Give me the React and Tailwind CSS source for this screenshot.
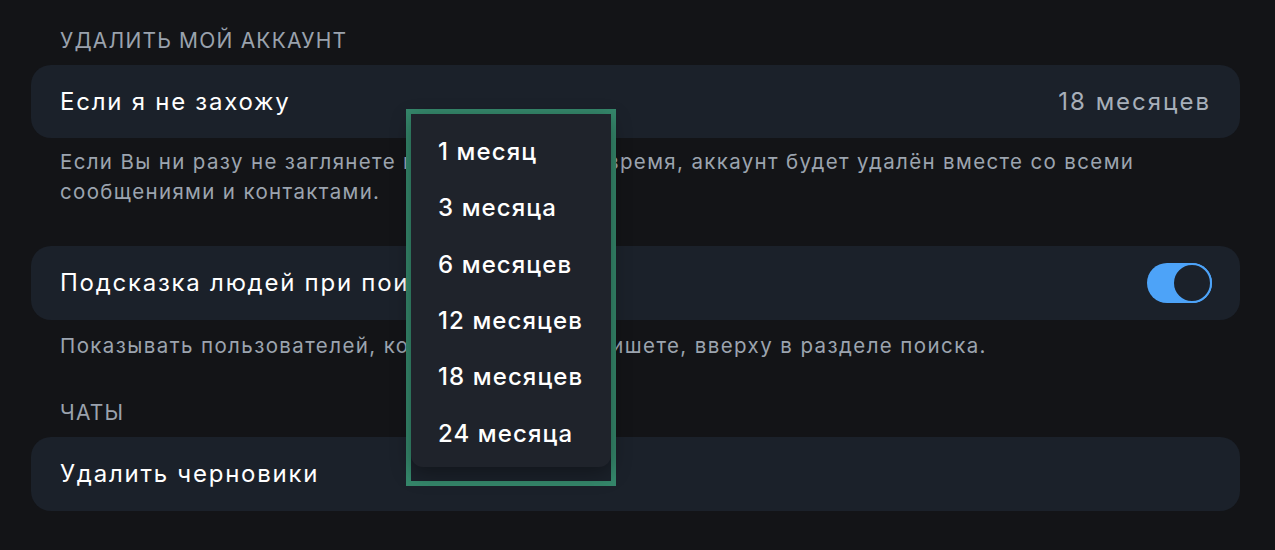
export default function App() {
  const options = ["1 месяц", "3 месяца", "6 месяцев", "12 месяцев", "18 месяцев", "24 месяца"];

  return (
    <div className="relative h-[550px] w-[1275px] overflow-hidden bg-[#131417] pt-[28px] pl-[31px] pr-[35px] font-['Inter','Noto_Sans',sans-serif] antialiased">
      {/* Удалить аккаунт */}
      <p className="pl-[29px] text-[21px] leading-[26px] tracking-[1.2px] text-[#9aa2ad] mb-[11px]">УДАЛИТЬ МОЙ АККАУНТ</p>
      <div className="flex h-[73px] items-center justify-between rounded-[20px] bg-[#1b212a] px-[29px]">
        <span className="text-[24px] tracking-[1.75px] text-white">Если я не захожу</span>
        <span className="text-[24px] tracking-[2px] text-[#a7afb9]">18 месяцев</span>
      </div>
      <p className="pl-[29px] pt-[9px] text-[20.5px] leading-[30px] tracking-[1.35px] text-[#9ca4af] mb-[39px]">
        Если Вы ни разу не заглянете в Telegram за это время, аккаунт будет удалён вместе со всеми
        <br />
        сообщениями и контактами.
      </p>

      {/* Подсказка людей */}
      <div className="flex h-[74px] items-center justify-between rounded-[20px] bg-[#1b212a] pl-[29px] pr-[28px]">
        <span className="text-[24px] tracking-[1.75px] text-white">Подсказка людей при поиске</span>
        <div className="flex h-[40px] w-[65px] items-center justify-end rounded-full bg-[#4da3f8]">
          <div className="h-[40px] w-[40px] rounded-full border-[2px] border-[#4da3f8] bg-[#1b212a]" />
        </div>
      </div>
      <p className="pl-[29px] pt-[11px] text-[20.5px] leading-[30px] tracking-[1.4px] text-[#9ca4af]">
        Показывать пользователей, которым Вы часто пишете, вверху в разделе поиска.
      </p>

      {/* Чаты */}
      <p className="mt-[39px] pl-[29px] text-[21px] leading-[26px] tracking-[1.2px] text-[#9aa2ad] mb-[11px]">ЧАТЫ</p>
      <div className="flex h-[74px] items-center rounded-[20px] bg-[#1b212a] px-[29px]">
        <span className="text-[24px] tracking-[1.75px] text-white">Удалить черновики</span>
      </div>

      {/* Выпадающее меню */}
      <div className="absolute left-[406px] top-[109px] h-[377px] w-[210px] border-[5px] border-[#35876b]">
        <div className="flex h-[353px] flex-col rounded-b-[12px] bg-[#1f232b] pt-[10px] shadow-[0_6px_20px_rgba(0,0,0,0.35)]">
          {options.map((o) => (
            <div key={o} className="flex h-[56.3px] items-center pl-[27px] text-[24px] font-medium tracking-[1.1px] text-white">
              {o}
            </div>
          ))}
        </div>
      </div>
    </div>
  );
}
